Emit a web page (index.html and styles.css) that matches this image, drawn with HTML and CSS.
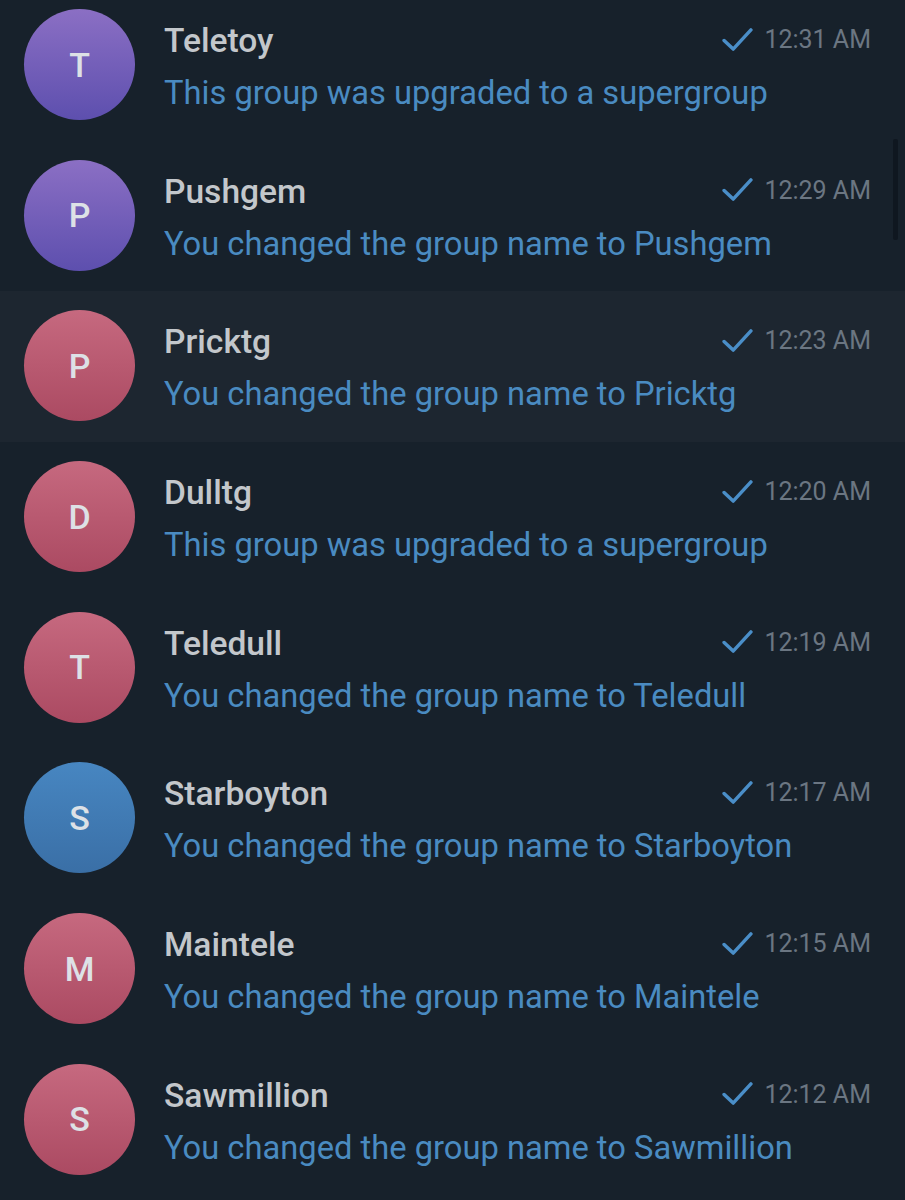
FILE: index.html
```html
<!DOCTYPE html>
<html>
<head>
<meta charset="utf-8">
<link rel="stylesheet" href="styles.css">
</head>
<body>
<div class="screen">
  <div class="list">
    <div class="row">
      <div class="avatar purple">T</div>
      <div class="info">
        <div class="top"><span class="name">Teletoy</span><span class="meta"><svg class="check" viewBox="0 0 32 24"><path d="M2 13 L11.5 22 L30 2"/></svg><span class="time">12:31 AM</span></span></div>
        <div class="msg">This group was upgraded to a supergroup</div>
      </div>
    </div>
    <div class="row">
      <div class="avatar purple">P</div>
      <div class="info">
        <div class="top"><span class="name">Pushgem</span><span class="meta"><svg class="check" viewBox="0 0 32 24"><path d="M2 13 L11.5 22 L30 2"/></svg><span class="time">12:29 AM</span></span></div>
        <div class="msg">You changed the group name to Pushgem</div>
      </div>
    </div>
    <div class="row active">
      <div class="avatar red">P</div>
      <div class="info">
        <div class="top"><span class="name">Pricktg</span><span class="meta"><svg class="check" viewBox="0 0 32 24"><path d="M2 13 L11.5 22 L30 2"/></svg><span class="time">12:23 AM</span></span></div>
        <div class="msg">You changed the group name to Pricktg</div>
      </div>
    </div>
    <div class="row">
      <div class="avatar red">D</div>
      <div class="info">
        <div class="top"><span class="name">Dulltg</span><span class="meta"><svg class="check" viewBox="0 0 32 24"><path d="M2 13 L11.5 22 L30 2"/></svg><span class="time">12:20 AM</span></span></div>
        <div class="msg">This group was upgraded to a supergroup</div>
      </div>
    </div>
    <div class="row">
      <div class="avatar red">T</div>
      <div class="info">
        <div class="top"><span class="name">Teledull</span><span class="meta"><svg class="check" viewBox="0 0 32 24"><path d="M2 13 L11.5 22 L30 2"/></svg><span class="time">12:19 AM</span></span></div>
        <div class="msg">You changed the group name to Teledull</div>
      </div>
    </div>
    <div class="row">
      <div class="avatar blue">S</div>
      <div class="info">
        <div class="top"><span class="name">Starboyton</span><span class="meta"><svg class="check" viewBox="0 0 32 24"><path d="M2 13 L11.5 22 L30 2"/></svg><span class="time">12:17 AM</span></span></div>
        <div class="msg">You changed the group name to Starboyton</div>
      </div>
    </div>
    <div class="row">
      <div class="avatar red">M</div>
      <div class="info">
        <div class="top"><span class="name">Maintele</span><span class="meta"><svg class="check" viewBox="0 0 32 24"><path d="M2 13 L11.5 22 L30 2"/></svg><span class="time">12:15 AM</span></span></div>
        <div class="msg">You changed the group name to Maintele</div>
      </div>
    </div>
    <div class="row">
      <div class="avatar red">S</div>
      <div class="info">
        <div class="top"><span class="name">Sawmillion</span><span class="meta"><svg class="check" viewBox="0 0 32 24"><path d="M2 13 L11.5 22 L30 2"/></svg><span class="time">12:12 AM</span></span></div>
        <div class="msg">You changed the group name to Sawmillion</div>
      </div>
    </div>
  </div>
  <div class="scrollbar"></div>
</div>
</body>
</html>
```
FILE: styles.css
```css
html, body {
  margin: 0;
  padding: 0;
  background: #17212b;
}
body {
  font-family: Roboto, "Noto Sans", sans-serif;
  overflow: hidden;
}
.screen {
  position: relative;
  width: 905px;
  height: 1200px;
  overflow: hidden;
  background: #17212b;
}
.list {
  margin-top: -10px;
}
.row {
  display: flex;
  align-items: flex-start;
  height: 150.7px;
  box-sizing: border-box;
  padding: 19px 34px 0 24px;
  gap: 29px;
}
.row.active {
  background: #1d2630;
}
.avatar {
  flex: 0 0 111px;
  width: 111px;
  height: 111px;
  border-radius: 50%;
  display: flex;
  align-items: center;
  justify-content: center;
  color: #dde1e6;
  font-size: 34px;
  font-weight: 500;
}
.avatar.purple {
  background: linear-gradient(180deg, #8b6fc4 0%, #5d4fae 100%);
}
.avatar.red {
  background: linear-gradient(180deg, #c6697f 0%, #ab4a62 100%);
}
.avatar.blue {
  background: linear-gradient(180deg, #4786c1 0%, #3a6fa6 100%);
}
.info {
  flex: 1;
  min-width: 0;
  display: flex;
  flex-direction: column;
}
.top {
  display: flex;
  justify-content: space-between;
  align-items: baseline;
  height: 44px;
  margin-top: 10px;
}
.name {
  color: #c3c7cb;
  font-size: 33.6px;
  font-weight: 500;
  line-height: 44px;
}
.meta {
  display: flex;
  align-items: baseline;
  gap: 11px;
  position: relative;
  top: -4px;
}
.check {
  width: 31px;
  height: 23px;
  align-self: center;
  position: relative;
  top: -1px;
  fill: none;
  stroke: #4a8ec8;
  stroke-width: 3.6;
  stroke-linecap: round;
  stroke-linejoin: round;
}
.time {
  color: #6b7682;
  font-size: 25px;
  line-height: 44px;
}
.msg {
  color: #4a8bc1;
  font-size: 32.7px;
  line-height: 48px;
  margin-top: 6px;
  white-space: nowrap;
}
.scrollbar {
  position: absolute;
  left: 893px;
  top: 139px;
  width: 5px;
  height: 101px;
  background: #0f1720;
  border-radius: 2px;
}
```
